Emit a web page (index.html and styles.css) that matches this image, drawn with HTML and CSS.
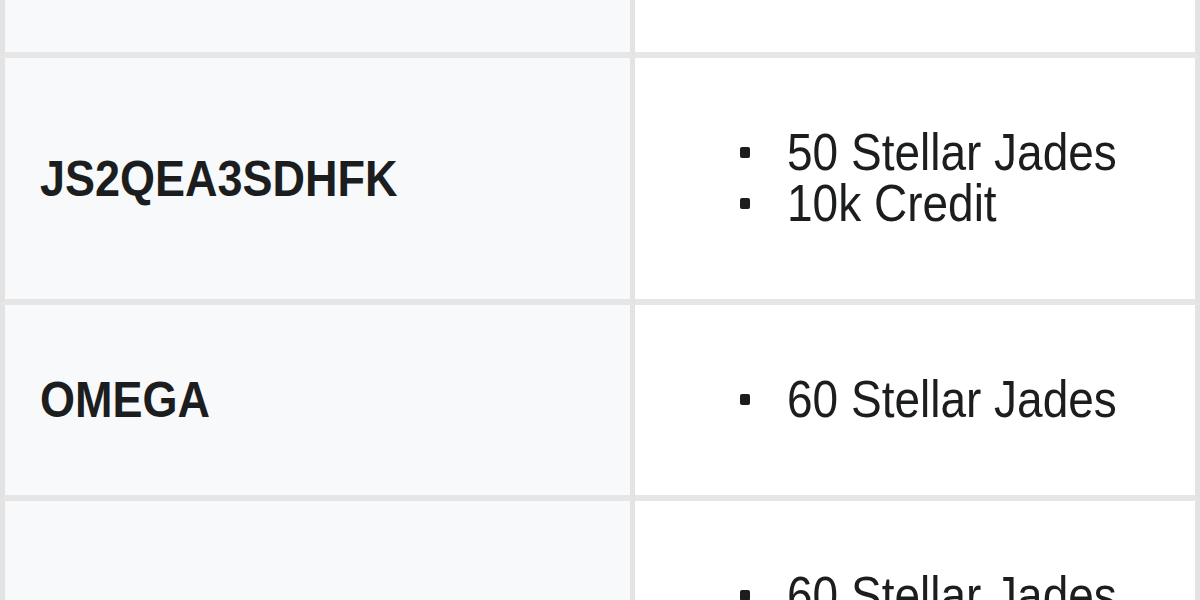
FILE: index.html
```html
<!DOCTYPE html>
<html>
<head>
<meta charset="utf-8">
<link rel="stylesheet" href="styles.css">
</head>
<body>
<table class="codes">
  <colgroup>
    <col class="col-code">
    <col class="col-rewards">
  </colgroup>
  <tbody>
    <tr class="row-cut">
      <td class="code"></td>
      <td class="rewards"></td>
    </tr>
    <tr>
      <td class="code"><span class="txt">JS2QEA3SDHFK</span></td>
      <td class="rewards">
        <ul class="list">
          <li><span class="txt">50 Stellar Jades</span></li>
          <li><span class="txt">10k Credit</span></li>
        </ul>
      </td>
    </tr>
    <tr>
      <td class="code"><span class="txt">OMEGA</span></td>
      <td class="rewards">
        <ul class="list">
          <li><span class="txt">60 Stellar Jades</span></li>
        </ul>
      </td>
    </tr>
    <tr>
      <td class="code"><span class="txt">STARRAILGIFT</span></td>
      <td class="rewards">
        <ul class="list">
          <li><span class="txt">60 Stellar Jades</span></li>
          <li><span class="txt">5 Traveler's Guide</span></li>
          <li><span class="txt">10k Credit</span></li>
        </ul>
      </td>
    </tr>
  </tbody>
</table>
</body>
</html>
```

FILE: styles.css
```css
html, body {
  margin: 0;
  padding: 0;
  background: #ffffff;
}

body {
  font-family: "Liberation Sans", Arial, sans-serif;
  color: #1c1d1e;
  overflow: hidden;
}

.codes {
  width: 1200px;
  border-collapse: separate;
  border-spacing: 0;
  table-layout: fixed;
}

.col-code {
  width: 635px;
}

.col-rewards {
  width: 565px;
}

.codes td {
  vertical-align: middle;
  padding: 69px 0 70px 0;
  border-bottom: 6px solid #e6e6e6;
}

.codes .row-cut td {
  height: 58px;
  padding: 0;
  box-sizing: border-box;
}

.code {
  background: #f8f9fa;
  border-left: 5px solid #e3e3e3;
  border-right: 5px solid #e3e3e3;
  padding-left: 35px !important;
  font-weight: bold;
  font-size: 45px;
  line-height: 51px;
}

.rewards {
  background: #ffffff;
  border-right: 5px solid #e3e3e3;
  font-size: 46px;
  line-height: 51px;
}

.txt {
  display: inline-block;
  line-height: 40px;
  transform: scaleY(1.13);
  white-space: nowrap;
}

.list {
  list-style: none;
  margin: 0;
  padding: 0 0 0 105px;
}

.list li {
  position: relative;
  padding-left: 47px;
  height: 51px;
}

.list li::before {
  content: "";
  position: absolute;
  left: 0;
  top: 20px;
  width: 10px;
  height: 11px;
  border-radius: 2px;
  background: #1c1d1e;
}
```
